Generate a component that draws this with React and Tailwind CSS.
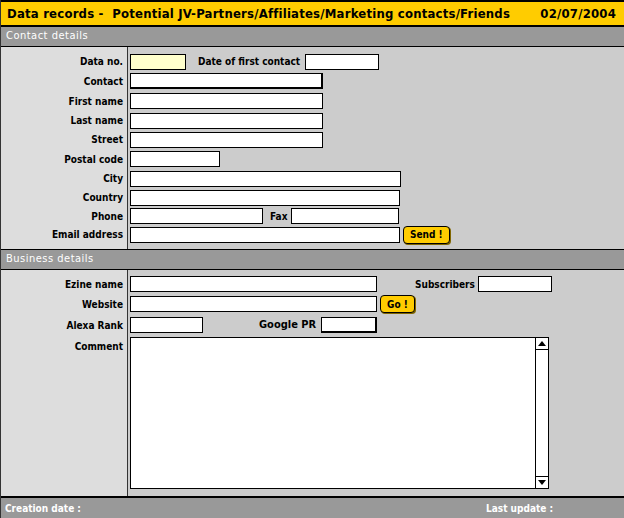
import React from 'react';

const lbl = "text-[10px] font-bold text-black";

function Input({ w, yellow, thick }) {
  return (
    <div
      className={
        "h-[16px] border border-black " +
        (yellow ? "bg-[#ffffcc] " : "bg-white ") +
        (thick ? "border-r-2 border-b-2 " : "")
      }
      style={{ width: w }}
    />
  );
}

function Row({ label, h, children }) {
  return (
    <div className="flex" style={{ height: h }}>
      <div className="w-[127px] shrink-0 bg-[#dddddd] border-r border-[#333] flex items-center justify-end pr-[4px]">
        <span className={lbl}>{label}</span>
      </div>
      <div className="flex-1 flex items-center pl-[2px]">{children}</div>
    </div>
  );
}

function Spacer({ h }) {
  return (
    <div className="flex" style={{ height: h }}>
      <div className="w-[127px] shrink-0 bg-[#dddddd] border-r border-[#333]" />
      <div className="flex-1" />
    </div>
  );
}

function YButton({ children }) {
  return (
    <div className="h-[18px] px-[6px] rounded-[4px] border border-black bg-[#ffcc00] flex items-center text-[10px] font-bold shadow-[1px_1px_0_#806600]">
      {children}
    </div>
  );
}

function SectionHead({ title }) {
  return (
    <div className="h-[20px] bg-[#999999] border-b border-black flex items-center pl-[5px] text-[11px] text-white tracking-[0.5px]">
      {title}
    </div>
  );
}

export default function App() {
  return (
    <div
      className="w-[624px] h-[518px] bg-[#cccccc] flex flex-col overflow-hidden border-l border-[#333]"
      style={{ fontFamily: '"DejaVu Sans Condensed", "DejaVu Sans", Verdana, sans-serif' }}
    >
      {/* Title bar */}
      <div className="h-[27px] bg-[#ffcc00] border-y-2 border-black flex items-center justify-between pl-[6px] pr-[8px] text-[13px] font-bold text-black tracking-[0.2px]">
        <span className="whitespace-pre">Data records -  Potential JV-Partners/Affiliates/Marketing contacts/Friends</span>
        <span>02/07/2004</span>
      </div>

      <SectionHead title="Contact details" />
      <Spacer h={5} />
      <Row label="Data no." h={19}>
        <Input w={56} yellow />
        <span className={lbl + " ml-[12px] mr-[5px]"}>Date of first contact</span>
        <Input w={74} />
      </Row>
      <Row label="Contact" h={20}>
        <Input w={193} thick />
      </Row>
      <Row label="First name" h={20}>
        <Input w={193} />
      </Row>
      <Row label="Last name" h={19}>
        <Input w={193} />
      </Row>
      <Row label="Street" h={19}>
        <Input w={193} />
      </Row>
      <Row label="Postal code" h={20}>
        <Input w={90} />
      </Row>
      <Row label="City" h={19}>
        <Input w={271} />
      </Row>
      <Row label="Country" h={19}>
        <Input w={270} />
      </Row>
      <Row label="Phone" h={18}>
        <Input w={133} />
        <span className={lbl + " ml-[7px] mr-[4px]"}>Fax</span>
        <Input w={108} />
      </Row>
      <Row label="Email address" h={19}>
        <Input w={270} />
        <div className="ml-[3px]">
          <YButton>Send !</YButton>
        </div>
      </Row>
      <Spacer h={5} />

      <div className="border-t border-black">
        <SectionHead title="Business details" />
      </div>
      <Spacer h={4} />
      <Row label="Ezine name" h={20}>
        <Input w={247} />
        <span className={lbl + " ml-[38px] mr-[3px]"}>Subscribers</span>
        <Input w={74} />
      </Row>
      <Row label="Website" h={20}>
        <Input w={247} />
        <div className="ml-[3px]">
          <YButton>Go !</YButton>
        </div>
      </Row>
      <Row label="Alexa Rank" h={22}>
        <Input w={73} />
        <span className={lbl + " ml-[56px] mr-[5px] text-[11px]"}>Google PR</span>
        <Input w={56} thick />
      </Row>
      <div className="flex flex-1">
        <div className="w-[127px] shrink-0 bg-[#dddddd] border-r border-[#333] flex justify-end pr-[4px] pt-[3px]">
          <span className={lbl}>Comment</span>
        </div>
        <div className="flex-1 pl-[2px] pt-[1px] pb-[6px]">
          <div className="w-[419px] h-[152px] bg-white border border-black flex justify-end">
            <div className="w-[13px] border-l border-black flex flex-col justify-between">
              <div className="h-[12px] border-b border-black flex items-center justify-center">
                <div className="w-0 h-0 border-l-[4px] border-r-[4px] border-b-[5px] border-l-transparent border-r-transparent border-b-black" />
              </div>
              <div className="h-[12px] border-t border-black flex items-center justify-center">
                <div className="w-0 h-0 border-l-[4px] border-r-[4px] border-t-[5px] border-l-transparent border-r-transparent border-t-black" />
              </div>
            </div>
          </div>
        </div>
      </div>

      {/* Footer */}
      <div className="h-[22px] bg-[#999999] border-t-2 border-black flex items-center text-[10px] font-bold text-white">
        <span className="pl-[4px] w-[485px]">Creation date :</span>
        <span>Last update :</span>
      </div>
    </div>
  );
}
